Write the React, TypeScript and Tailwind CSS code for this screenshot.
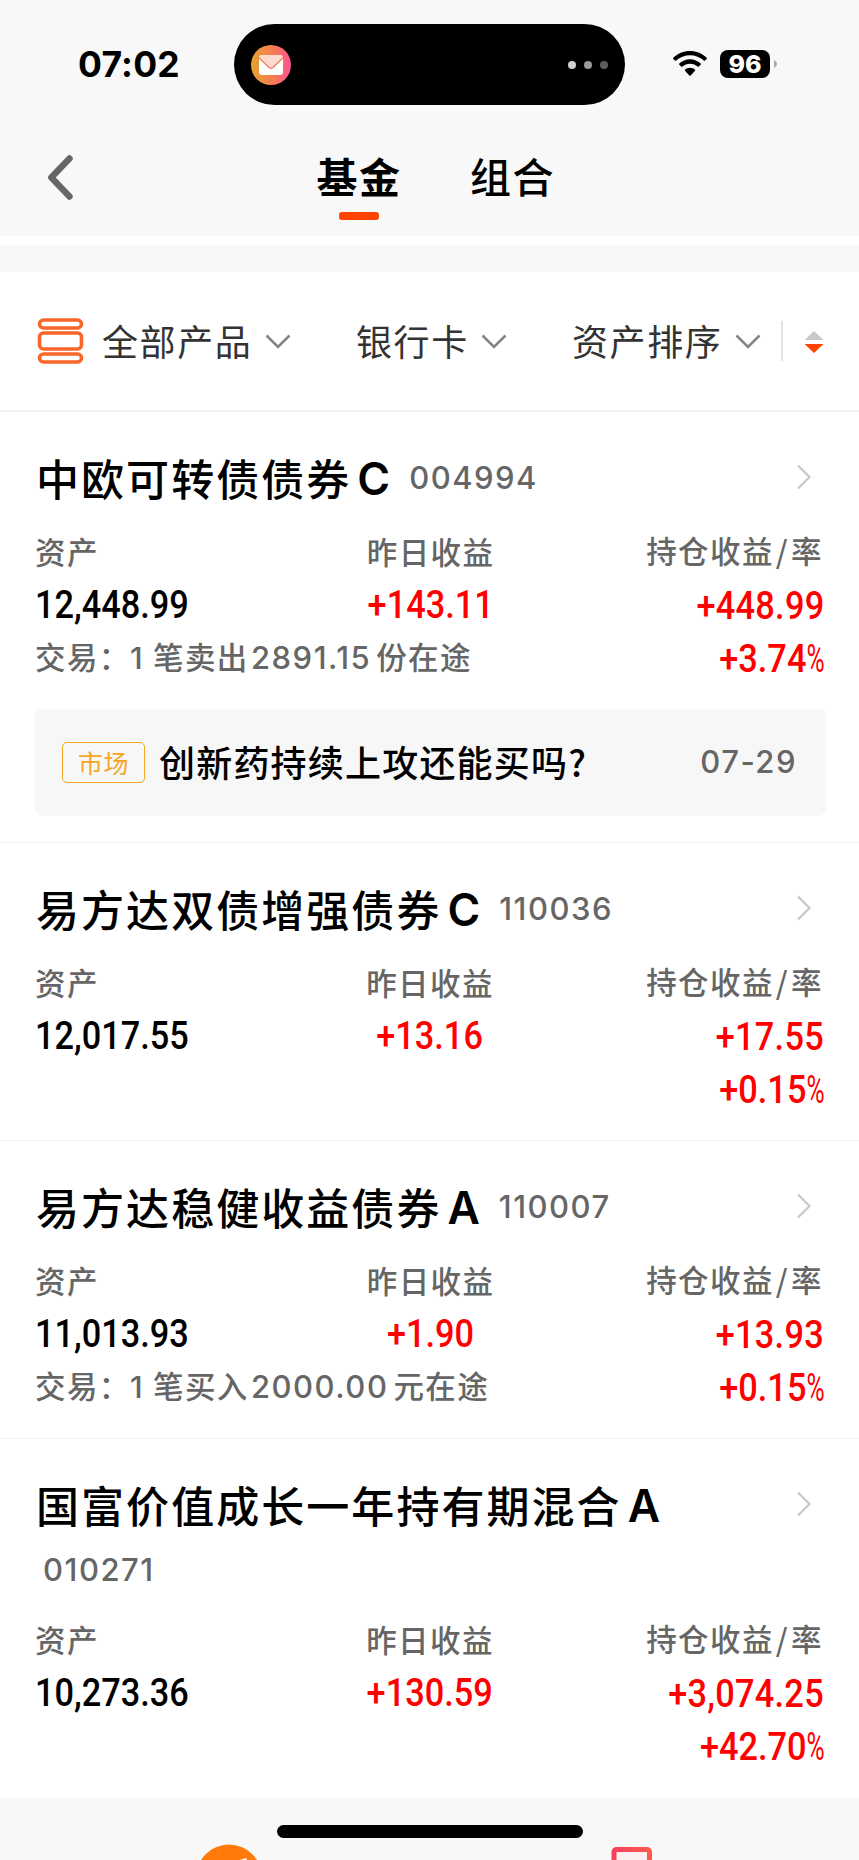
import React from "react";

type Fund = {
  name: string;
  suffix: string;
  code: string;
  wrapCode?: boolean;
  asset: string;
  daily: string;
  profit: string;
  rate: string;
  trade?: { before: string; amount: string; after: string };
  news?: { tag: string; title: string; date: string };
};

const funds: Fund[] = [
  {
    name: "中欧可转债债券",
    suffix: "C",
    code: "004994",
    asset: "12,448.99",
    daily: "+143.11",
    profit: "+448.99",
    rate: "+3.74",
    trade: { before: "笔卖出", amount: "2891.15", after: "份在途" },
    news: { tag: "市场", title: "创新药持续上攻还能买吗?", date: "07-29" },
  },
  {
    name: "易方达双债增强债券",
    suffix: "C",
    code: "110036",
    asset: "12,017.55",
    daily: "+13.16",
    profit: "+17.55",
    rate: "+0.15",
  },
  {
    name: "易方达稳健收益债券",
    suffix: "A",
    code: "110007",
    asset: "11,013.93",
    daily: "+1.90",
    profit: "+13.93",
    rate: "+0.15",
    trade: { before: "笔买入", amount: "2000.00", after: "元在途" },
  },
  {
    name: "国富价值成长一年持有期混合",
    suffix: "A",
    code: "010271",
    wrapCode: true,
    asset: "10,273.36",
    daily: "+130.59",
    profit: "+3,074.25",
    rate: "+42.70",
  },
];

function StatusBar() {
  return (
    <div className="flex h-[129px] shrink-0 items-start">
      <div className="w-[234px] pl-[78px] pt-[43px] font-['Inter',sans-serif] text-[35.5px] font-bold leading-[44px] tracking-[0.2px] text-black">
        07:02
      </div>
      <div className="mt-[24px] flex h-[81px] w-[391px] items-center justify-between rounded-full bg-black pl-[17px] pr-[17px]">
        <svg width="40" height="40" viewBox="0 0 40 40">
          <defs>
            <linearGradient id="mail" x1="0" y1="0" x2="1" y2="0">
              <stop offset="0" stopColor="#e3a32e" />
              <stop offset="0.55" stopColor="#f87b52" />
              <stop offset="1" stopColor="#fb5592" />
            </linearGradient>
          </defs>
          <circle cx="20" cy="20" r="20" fill="url(#mail)" />
          <rect x="8" y="10" width="24" height="20" rx="3" fill="#fff" />
          <path d="M8.5 11.5Q9.500 10 11 10H29Q30.500 10 31.500 11.500L21.500 22Q20 23.400 18.500 22Z" fill="#fdd9d0" />
          <path d="M7.800 12.500L18 22.500Q20 24.200 22 22.500L32.200 12.500" fill="none" stroke="#f37a55" strokeWidth="1.400" />
        </svg>
        <div className="flex gap-2">
          <span className="h-2 w-2 rounded-full bg-[#d0d0d0]" />
          <span className="h-2 w-2 rounded-full bg-[#9a9a9a]" />
          <span className="h-2 w-2 rounded-full bg-[#5e5e5e]" />
        </div>
      </div>
      <svg className="ml-[48px] mt-[50px]" width="34" height="27" viewBox="0 0 34 27">
        <path d="M17 1C10.500 1 4.600 3.500 0.300 7.700Q-0.200 8.300 0.300 8.900L2 10.600Q2.600 11.100 3.200 10.600C6.900 7.200 11.700 5.300 17 5.300S27.100 7.200 30.800 10.600Q31.400 11.100 32 10.600L33.700 8.900Q34.200 8.300 33.700 7.700C29.400 3.500 23.500 1 17 1Z" />
        <path d="M17 9.300C12.900 9.300 9.100 10.900 6.300 13.500Q5.700 14.100 6.300 14.700L8.200 16.600Q8.800 17.100 9.400 16.600C11.400 14.800 14.100 13.700 17 13.700S22.600 14.800 24.600 16.600Q25.200 17.100 25.800 16.600L27.700 14.700Q28.300 14.100 27.700 13.500C24.900 10.900 21.100 9.300 17 9.300Z" />
        <path d="M17 17.800C15 17.800 13.300 18.500 12 19.700Q11.600 20.200 12 20.700L16.300 25.400Q17 26 17.700 25.400L22 20.700Q22.400 20.200 22 19.700C20.700 18.500 19 17.800 17 17.800Z" />
      </svg>
      <div className="ml-[13px] mt-[50px] flex h-[28px] w-[50px] items-center justify-center rounded-[8px] bg-black font-['Inter',sans-serif] text-[25px] font-extrabold leading-none text-white">
        96
      </div>
      <svg className="ml-[3px] mt-[59px]" width="5" height="10" viewBox="0 0 5 10">
        <path d="M1 1Q4 2.500 4 5T1 9Z" fill="#aaa" />
      </svg>
    </div>
  );
}

function Header() {
  return (
    <div className="flex h-[107px] shrink-0">
      <svg className="ml-[44px] mt-[22px]" width="32" height="52" viewBox="0 0 32 52">
        <path d="M25.500 7.500L7.300 26.500L25.500 45.500" fill="none" stroke="#666" strokeWidth="6.400" strokeLinecap="round" strokeLinejoin="round" />
      </svg>
      <div className="ml-[241px] flex w-[83px] flex-col items-center">
        <span className="mt-[16px] whitespace-nowrap pl-px text-[41px] font-bold leading-[60px] tracking-[1.6px]">基金</span>
        <span className="mt-[7px] h-[8px] w-[40px] rounded-[3px] bg-[#ff4500]" />
      </div>
      <span className="ml-[70px] mt-[16px] text-[41px] font-medium leading-[60px] tracking-[1.6px]">组合</span>
    </div>
  );
}

function Down() {
  return (
    <svg className="mt-px" width="26" height="16" viewBox="0 0 26 16">
      <path d="M1.500 1.500L13 13L24.500 1.500" fill="none" stroke="#858585" strokeWidth="2.600" />
    </svg>
  );
}

function FilterBar() {
  return (
    <div className="flex h-[138px] shrink-0 items-center bg-white pl-[37px] text-[36px] leading-[52px] tracking-[1.6px] text-[#333]">
      <svg width="47" height="46" viewBox="0 0 47 46" fill="none" stroke="#f9662b" strokeWidth="3.600">
        <rect x="2.500" y="2" width="42" height="8" rx="4" />
        <rect x="2.500" y="15" width="42" height="16" rx="4" />
        <rect x="2.500" y="36" width="42" height="8" rx="4" />
      </svg>
      <span className="-mt-[3px] ml-[18px] w-[163px]">全部产品</span>
      <Down />
      <span className="-mt-[3px] ml-[65px] w-[125px]">银行卡</span>
      <Down />
      <span className="-mt-[3px] ml-[65px] w-[163px]">资产排序</span>
      <Down />
      <span className="ml-[20px] h-[40px] w-[2px] bg-[#e3e3e3]" />
      <svg className="ml-[21px] mt-px" width="20" height="24" viewBox="0 0 20 24">
        <path d="M10 1L19.500 10H0.500Z" fill="#c9c9c9" />
        <path d="M10 23L19.500 14H0.500Z" fill="#ff4500" />
      </svg>
    </div>
  );
}

function Trade({ trade }: { trade: NonNullable<Fund["trade"]> }) {
  return (
    <div className="flex h-[54px] items-center whitespace-nowrap text-[30.5px] font-medium tracking-[1.4px] text-[#666]">
      <span className="-mt-[2px] w-[95px] shrink-0">交易：</span>
      <span className="w-[23px] shrink-0 font-['Inter',sans-serif]">1</span>
      <span className="-mt-[2px] w-[98px] shrink-0">{trade.before}</span>
      <span className="mr-[5px] shrink-0 font-['Inter',sans-serif] text-[31px] tracking-[1.5px]">{trade.amount}</span>
      <span className="-mt-[2px] shrink-0">{trade.after}</span>
    </div>
  );
}

const label = "flex h-[52px] shrink-0 items-center whitespace-nowrap text-[30.5px] font-medium tracking-[1.4px] text-[#666]";
const amount = "flex h-[52px] shrink-0 items-center whitespace-nowrap scale-x-[0.88] font-['Roboto',sans-serif] text-[39px] font-medium";

function FundItem({ fund, last }: { fund: Fund; last: boolean }) {
  const code = "font-['Inter',sans-serif] text-[31px] font-[540] tracking-[1.5px] text-[#666]";
  return (
    <section className={last ? "px-[35px] pt-[38px]" : "border-b border-[#f0f0f0] px-[35px] pt-[38px]"}>
      <div className="flex h-[54px] items-center whitespace-nowrap">
        <h2 className="-mt-px pl-px text-[43px] font-medium leading-[54px] tracking-[2.05px]">{fund.name}</h2>
        <span className="ml-[6px] mt-[3px] font-['Inter',sans-serif] text-[44.5px] font-[560] leading-[54px]">{fund.suffix}</span>
        {!fund.wrapCode && <span className={"ml-[19px] mt-[3px] " + code}>{fund.code}</span>}
        <svg className="ml-auto mr-[12px]" width="16" height="26" viewBox="0 0 16 26">
          <path d="M2 1.500L13.500 13L2 24.500" fill="none" stroke="#c8c8c8" strokeWidth="2.200" />
        </svg>
      </div>
      {fund.wrapCode && <div className={"flex h-[61px] items-end pl-[8px] leading-[44px] " + code}>{fund.code}</div>}
      <div className="mt-[22px] flex h-[157px] justify-between">
        <div className="w-[300px]">
          <div className={label}>资产</div>
          <div className={amount + " mt-px origin-left text-black"}>{fund.asset}</div>
          {fund.trade && <Trade trade={fund.trade} />}
        </div>
        <div className="flex w-[192px] flex-col items-center">
          <div className={label}>昨日收益</div>
          <div className={amount + " mt-px text-[#ff0000]"}>{fund.daily}</div>
        </div>
        <div className="-mt-px flex w-[299px] flex-col items-end">
          <div className={label + " pr-px"}>
            持仓收益<span className="ml-[2px] mr-[2px]">/</span>率
          </div>
          <div className={amount + " mt-[3px] origin-right tracking-[0.3px] text-[#ff0000]"}>{fund.profit}</div>
          <div className={amount + " mt-px origin-right text-[#ff0000]"}>
            {fund.rate}
            <span className="w-[20px]">
              <span className="inline-block origin-left scale-x-[0.72] font-normal">%</span>
            </span>
          </div>
        </div>
      </div>
      {fund.news ? (
        <div className="mb-[26px] mt-[26px] flex h-[107px] w-[791px] items-center whitespace-nowrap rounded-[8px] bg-[#f7f7f7] pl-[27px] pr-[29px]">
          <span className="flex h-[41px] w-[83px] items-center justify-center rounded-[5px] border border-[#f5a623] text-[25px] tracking-[0.5px] text-[#f5a623]">
            {fund.news.tag}
          </span>
          <span className="-mt-[4px] ml-[14px] text-[36px] font-medium tracking-[1.2px]">{fund.news.title}</span>
          <span className={"ml-auto " + code}>{fund.news.date}</span>
        </div>
      ) : (
        <div className="h-[26px]" />
      )}
    </section>
  );
}

export default function App() {
  return (
    <div className="flex h-[1860px] w-[859px] flex-col overflow-hidden bg-[#f8f8f8] font-['Noto_Sans_CJK_SC',sans-serif] text-black">
      <StatusBar />
      <Header />
      <div className="h-[9px] shrink-0 bg-white" />
      <div className="h-[27px] shrink-0" />
      <FilterBar />
      <main className="h-[1388px] shrink-0 border-t-2 border-[#f0f0f0] bg-white">
        {funds.map((f, i) => (
          <FundItem key={f.code} fund={f} last={i === funds.length - 1} />
        ))}
      </main>
      <footer className="flex h-[62px] shrink-0 flex-col pt-[27px]">
        <div className="h-[13px] w-[306px] shrink-0 self-center rounded-full bg-black" />
        <svg className="mt-[4px] shrink-0" width="859" height="18" viewBox="0 0 859 18">
          <defs>
            <linearGradient id="doc" x1="0" y1="0" x2="1" y2="0">
              <stop offset="0" stopColor="#f8405c" />
              <stop offset="1" stopColor="#fb5a4c" />
            </linearGradient>
          </defs>
          <circle cx="229" cy="35.500" r="33" fill="#ff7a08" />
          <path d="M240 18Q244 16.500 246 16L247 18Z" fill="#fff" />
          <rect x="614" y="7.500" width="35.500" height="40" rx="2.500" fill="#fbf0f0" stroke="url(#doc)" strokeWidth="5" />
        </svg>
      </footer>
    </div>
  );
}
